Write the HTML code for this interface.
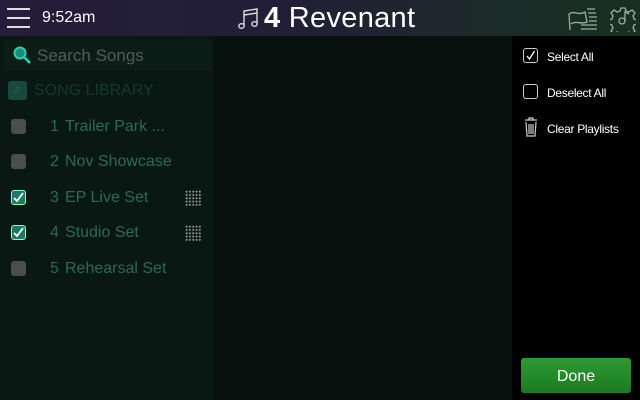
<!DOCTYPE html>
<html><head><style>
*{margin:0;padding:0;box-sizing:border-box}
body{width:640px;height:400px;overflow:hidden;background:#07120e;font-family:"Liberation Sans",sans-serif;position:relative}
.hdr{position:absolute;left:0;top:0;width:640px;height:36px;background:linear-gradient(90deg,#241d3b 0%,#221e38 45%,#1c2a2a 75%,#17301f 100%)}
.left{position:absolute;left:0;top:36px;width:214px;height:364px;background:#0a1813}
.right{position:absolute;left:512px;top:36px;width:128px;height:364px;background:#000}
.search{position:absolute;left:4px;top:40px;width:208px;height:30px;background:#0c1d17;border-radius:3px}
.t{position:absolute;white-space:nowrap}
.cb{position:absolute;left:11px;width:15px;height:15px;border-radius:3px;background:#4a4e4d}
.cb.on{background:#1d7a68;border:1px solid #8fb}
.num{position:absolute;left:50px;font-size:16px;color:#2a6a54}
.item{position:absolute;left:65px;font-size:16px;color:#2a6a54}
.grid{position:absolute;left:185px;width:16px;height:16px;background-image:radial-gradient(circle,#9a9a9a 0.9px,transparent 1.1px);background-size:3.3px 3.3px}
.rt{position:absolute;left:547px;font-size:12px;color:#fff;letter-spacing:-0.3px}
.ck{position:absolute}
</style></head><body>
<div class="hdr"></div>
<div style="position:absolute;left:7px;top:8px;width:23px;height:2px;background:#ddd"></div>
<div style="position:absolute;left:7px;top:17px;width:23px;height:2px;background:#ddd"></div>
<div style="position:absolute;left:7px;top:26px;width:23px;height:2px;background:#ddd"></div>
<div class="t" style="left:42px;top:9px;font-size:16px;color:#fff">9:52am</div>
<svg style="position:absolute;left:238px;top:7px" width="22" height="23" viewBox="0 0 22 23" fill="none" stroke="#ddd" stroke-width="1.4"><path d="M6 18V4l13-2v14"/><path d="M6 8l13-2"/><ellipse cx="3.5" cy="19" rx="2.7" ry="2.3"/><ellipse cx="16.5" cy="17" rx="2.7" ry="2.3"/></svg>
<div class="t" style="left:264px;top:2px;font-size:29px;color:#fff;letter-spacing:0.3px"><b>4</b> Revenant</div>
<svg style="position:absolute;left:567px;top:6px" width="34" height="26" viewBox="0 0 34 26" fill="none" stroke="#9ab0a0" stroke-width="1.3"><path d="M3 24L2 8c5-4 9 2 16-2l2 10c-6 3-10-2-16 2"/><path d="M20 3h8M21 7h8M22 11h8M22 15h8M14 19h16M14 23h16"/></svg>
<svg style="position:absolute;left:610px;top:6px" width="26" height="26" viewBox="0 0 26 26" fill="none" stroke="#9ab0a0" stroke-width="1.3"><path d="M11 2h4l1 3 3 1 3-2 3 3-2 3 1 3 3 1v4l-3 1-1 3 2 3-3 3-3-2-3 1-1 3h-4l-1-3-3-1-3 2-3-3 2-3-1-3-3-1v-4l3-1 1-3-2-3 3-3 3 2 3-1z"/><circle cx="12" cy="15" r="3"/><path d="M15 15V6l4 2"/></svg>
<div class="left"></div>
<div class="right"></div>
<div class="search"></div>
<svg style="position:absolute;left:12px;top:45px" width="20" height="20" viewBox="0 0 20 20" fill="none" stroke="#2ad0b0" stroke-width="2"><circle cx="8" cy="8" r="5.5" fill="#1a8a78"/><path d="M12 12l6 6" stroke-width="2.5"/></svg>
<div class="t" style="left:37px;top:46px;font-size:17px;color:#545a58">Search Songs</div>
<div style="position:absolute;left:8px;top:81px;width:19px;height:19px;border-radius:3px;background:#164a3c"></div>
<div class="t" style="left:13px;top:84px;font-size:11px;color:#2a6a54">♫</div>
<div class="t" style="left:34px;top:82px;font-size:16px;color:#133a2e">SONG LIBRARY</div>
<div class="cb" style="top:119px"></div><div class="num" style="top:118px">1</div><div class="item" style="top:118px">Trailer Park ...</div>
<div class="cb" style="top:154px"></div><div class="num" style="top:153px">2</div><div class="item" style="top:153px">Nov Showcase</div>
<div class="cb on" style="top:190px"></div><svg class="ck" style="left:12px;top:191px" width="13" height="13" viewBox="0 0 13 13" fill="none" stroke="#fff" stroke-width="1.8"><path d="M2 7l3 3 6-8"/></svg><div class="num" style="top:189px">3</div><div class="item" style="top:189px">EP Live Set</div><div class="grid" style="top:190px"></div>
<div class="cb on" style="top:225px"></div><svg class="ck" style="left:12px;top:226px" width="13" height="13" viewBox="0 0 13 13" fill="none" stroke="#fff" stroke-width="1.8"><path d="M2 7l3 3 6-8"/></svg><div class="num" style="top:224px">4</div><div class="item" style="top:224px">Studio Set</div><div class="grid" style="top:225px"></div>
<div class="cb" style="top:261px"></div><div class="num" style="top:260px">5</div><div class="item" style="top:260px">Rehearsal Set</div>
<div style="position:absolute;left:523px;top:48px;width:15px;height:15px;border:1.5px solid #ccc;border-radius:3px"></div>
<svg class="ck" style="left:524px;top:49px" width="13" height="13" viewBox="0 0 13 13" fill="none" stroke="#fff" stroke-width="1.3"><path d="M3 7l2.5 3 5-8"/></svg>
<div class="rt" style="top:50px">Select All</div>
<div style="position:absolute;left:523px;top:84px;width:15px;height:15px;border:1.5px solid #ccc;border-radius:3px"></div>
<div class="rt" style="top:86px">Deselect All</div>
<svg style="position:absolute;left:524px;top:117px" width="14" height="20" viewBox="0 0 14 20" fill="none" stroke="#ccc" stroke-width="1.2"><path d="M1 3h12M5 3V1h4v2M2 5l1 14h8l1-14M5 7v10M7 7v10M9 7v10"/></svg>
<div class="rt" style="top:122px">Clear Playlists</div>
<div style="position:absolute;left:521px;top:358px;width:110px;height:35px;border-radius:3px;background:linear-gradient(#2c9a33,#1d7a22)"></div>
<div class="t" style="left:521px;top:368px;width:110px;text-align:center;font-size:16px;color:#fff">Done</div>
</body></html>
